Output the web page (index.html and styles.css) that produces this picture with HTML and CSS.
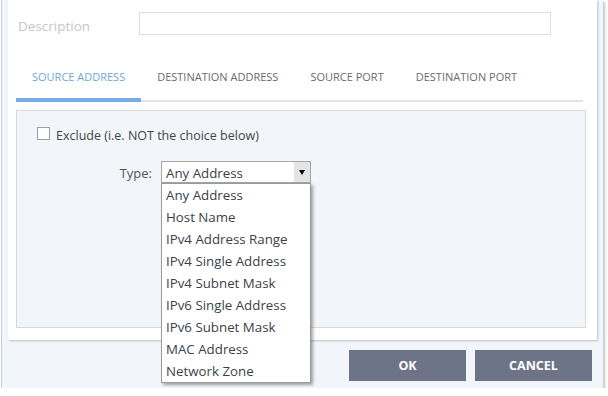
FILE: index.html
```html
<!DOCTYPE html>
<html lang="en">
<head>
    <meta charset="UTF-8" />
    <title>Network Object</title>
    <link rel="stylesheet" href="styles.css">
</head>
<body>
    <div class="dialog">
        <div class="panel">
            <div class="desc-row">
                <label class="desc-label" for="desc">Description</label>
                <input id="desc" class="desc-input" type="text" />
            </div>

            <ul class="tabs">
                <li class="tab active">SOURCE ADDRESS</li>
                <li class="tab">DESTINATION ADDRESS</li>
                <li class="tab">SOURCE PORT</li>
                <li class="tab">DESTINATION PORT</li>
            </ul>

            <div class="tab-body">
                <label class="check-row">
                    <span class="checkbox"></span>
                    <span class="check-text">Exclude (i.e. NOT the choice below)</span>
                </label>

                <div class="type-row">
                    <span class="type-label">Type:</span>
                    <div class="select">
                        <div class="select-box">
                            <span class="select-value">Any Address</span>
                            <span class="select-arrow"><i class="tri"></i></span>
                        </div>
                        <ul class="options">
                            <li>Any Address</li>
                            <li>Host Name</li>
                            <li>IPv4 Address Range</li>
                            <li>IPv4 Single Address</li>
                            <li>IPv4 Subnet Mask</li>
                            <li>IPv6 Single Address</li>
                            <li>IPv6 Subnet Mask</li>
                            <li>MAC Address</li>
                            <li>Network Zone</li>
                        </ul>
                    </div>
                </div>
            </div>
        </div>

        <div class="actions">
            <button class="btn">OK</button>
            <button class="btn">CANCEL</button>
        </div>
    </div>
</body>
</html>
```

FILE: styles.css
```css
/* base */
*, ::before, ::after { box-sizing: border-box; }
html, body { margin: 0; padding: 0; background: #ffffff; }
body { font-family: "Open Sans", "Noto Sans", sans-serif; font-size: 12px; color: #444444; }
ul { list-style: none; margin: 0; padding: 0; }

/* outer dialog */
.dialog { width: 602px; height: 388px; margin-left: 1px; background: #f2f6fa; border-left: 1px solid #c3cfd9; box-shadow: 2px 2px 2px rgba(0, 0, 0, 0.22); padding: 0 6px 0 6px; display: flex; flex-direction: column; }

/* white panel */
.panel { width: 589px; height: 340px; background: #ffffff; padding: 12px 14px 0 8px; box-shadow: 1px 1px 2px rgba(0, 0, 0, 0.22); }

.desc-row { display: flex; align-items: flex-start; padding-left: 2px; height: 23px; }
.desc-label { width: 121px; padding-top: 5px; line-height: 18px; font-size: 13.5px; color: #c6c6c6; }
.desc-input { width: 412px; height: 23px; border: 1px solid #dddddd; background: #ffffff; padding: 0 4px; }

/* tabs */
.tabs { display: flex; margin-top: 17px; border-bottom: 2px solid #e3e3e3; }
.tab { padding: 17px 16px 15px; line-height: 16px; font-size: 11px; color: #6b6b6b; }
.tab.active { color: #6fa6dc; border-bottom: 4px solid #74aee3; margin-bottom: -2px; padding-bottom: 13px; }

.tab-body { position: relative; width: 570px; height: 218px; margin-top: 8px; background: #f2f6fa; border: 1px solid #d6d9dc; padding: 16px 20px; }

.check-row { display: flex; align-items: center; gap: 6px; height: 13px; font-size: 12.5px; color: #444444; }
.checkbox { width: 13px; height: 13px; border: 1px solid #9e9e9e; background: #ffffff; }
.check-text { position: relative; top: 2px; }

.type-row { display: flex; align-items: center; margin-top: 21px; }
.type-label { width: 115px; margin-right: 9px; padding-top: 2px; text-align: right; font-size: 13px; color: #555555; }

/* select with open list */
.select { position: relative; width: 150px; }
.select-box { display: flex; height: 22px; border: 1px solid #a6a6a6; background: #ffffff; }
.select-value { flex: 1; padding: 1px 0 0 4px; line-height: 20px; font-size: 13.3px; color: #3a3f4a; }
.select-arrow { width: 16px; background: #e4e4e4; display: flex; align-items: center; justify-content: center; }
.tri { width: 0; height: 0; border-left: 3.5px solid transparent; border-right: 3.5px solid transparent; border-top: 5px solid #000000; }

.options { position: absolute; top: 22px; left: 0; width: 150px; background: #ffffff; border: 1px solid #9a9a9a; box-shadow: 2px 2px 3px rgba(0, 0, 0, 0.35); z-index: 2; }
.options li { height: 22px; padding: 1px 0 0 4px; line-height: 21px; font-size: 13.3px; color: #3a3f4a; white-space: nowrap; }

/* footer buttons */
.actions { display: flex; justify-content: flex-end; gap: 9px; padding: 10px 5px 0 0; }
.btn { width: 117px; height: 31px; border: 0; background: #6e7487; color: #ffffff; font-family: inherit; font-size: 12.5px; font-weight: 700; }
```
